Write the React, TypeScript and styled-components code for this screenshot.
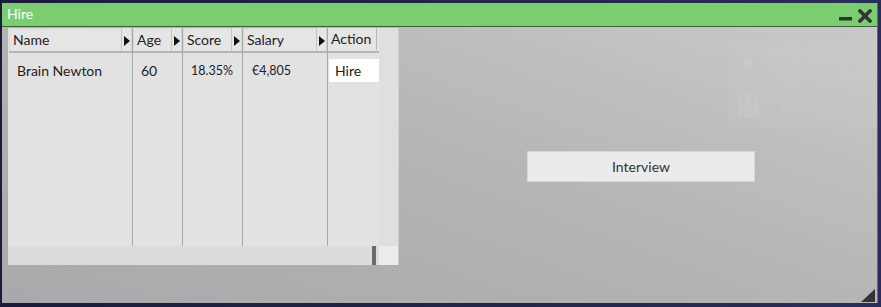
import React from "react";
import styled, { createGlobalStyle } from "styled-components";

const Global = createGlobalStyle`
  html, body { margin: 0; padding: 0; }
  body { width: 881px; height: 307px; overflow: hidden; background: #1c1e3c; font-family: Lato, "Noto Sans", sans-serif; }
  #root { width: 881px; height: 307px; }
`;

const Page = styled.div`
  width: 881px;
  height: 307px;
  box-sizing: border-box;
  padding: 3px 3px 4px 2px;
  background: linear-gradient(90deg, #1a1c3a 0%, #23264a 60%, #2a2f5a 100%);
`;

const Window = styled.div`
  height: 100%;
  display: flex;
  flex-direction: column;
  border-right: 1px solid #5a64a8;
`;

const TitleBar = styled.div`
  height: 23px;
  flex: none;
  background: #7bce70;
  border-bottom: 1px solid #3d5e3a;
  display: flex;
  align-items: center;
  padding: 0 5px 0 5px;
`;

const Title = styled.span`
  color: #ffffff;
  font-size: 14px;
  flex: 1;
  margin-top: -3px;
`;

const TitleIcons = styled.div`
  display: flex;
  align-items: center;
  gap: 6px;
  margin-top: 3px;
`;

const Minimize = styled.svg`
  margin-top: 6px;
`;

const Body = styled.div`
  flex: 1;
  position: relative;
  display: flex;
  padding: 1px 0 0 6px;
  background: linear-gradient(20deg, #a9a9ab 0%, #b1b1b1 40%, #bebebe 75%, #c9c9c9 100%);
  overflow: hidden;
`;

const Ghost = styled.div`
  position: absolute;
  left: 725px;
  top: 14px;
  width: 160px;
  height: 86px;
  background: rgba(255, 255, 255, 0.035);
  color: rgba(255, 255, 255, 0.08);
  display: flex;
  flex-direction: column;
  overflow: hidden;
`;

const GhostRow = styled.div<{ $gap: number; $pad: number }>`
  display: flex;
  align-items: center;
  gap: ${(p) => p.$gap}px;
  padding: 0 0 0 ${(p) => p.$pad}px;
  border-bottom: 1px solid rgba(255, 255, 255, 0.05);
  height: 43px;
`;

const GhostText = styled.div`
  display: flex;
  flex-direction: column;
  line-height: 1;
`;

const GhostBig = styled.span<{ $size: number }>`
  font-size: ${(p) => p.$size}px;
`;

const GhostSmall = styled.span`
  font-size: 12px;
  white-space: nowrap;
  margin-top: 4px;
`;

const TablePanel = styled.div`
  width: 391px;
  height: 237px;
  flex: none;
  background: #e2e2e2;
  display: grid;
  grid-template-columns: 371px 20px;
  grid-template-rows: 218px 19px;
`;

const Grid = styled.div`
  display: flex;
  padding-left: 1px;
  overflow: hidden;
`;

const Column = styled.div<{ $w: number; $last?: boolean }>`
  width: ${(p) => p.$w}px;
  flex: none;
  display: flex;
  flex-direction: column;
  border-right: ${(p) => (p.$last ? "none" : "1px solid #a9a9a9")};
`;

const Header = styled.div`
  height: 23px;
  display: flex;
  border-bottom: 2px solid #b4b4b4;
  background: #e5e5e5;
  box-sizing: content-box;
`;

const HeaderLabel = styled.div`
  flex: 1;
  font-size: 14px;
  color: #222;
  padding: 2px 0 0 3px;
  border-right: 1px solid #c4c4c4;
  border-top: 1px solid #d8d8d8;
  border-left: 1px solid #d8d8d8;
`;

const SortButton = styled.div`
  width: 9px;
  display: flex;
  align-items: center;
  justify-content: center;
  border-right: 1px solid #d4d4d4;
  padding-top: 2px;
`;

const Arrow = styled.div`
  width: 0;
  height: 0;
  border-top: 5px solid transparent;
  border-bottom: 5px solid transparent;
  border-left: 6px solid #111;
  margin-left: 1px;
`;

const Cell = styled.div<{ $pad: number; $size: number }>`
  margin-top: 6px;
  height: 23px;
  display: flex;
  align-items: center;
  padding-left: ${(p) => p.$pad}px;
  font-size: ${(p) => p.$size}px;
  color: #222;
`;

const ActionCell = styled.div`
  margin: 6px 0 0 1px;
  height: 23px;
  width: 51px;
  background: #ffffff;
  display: flex;
  align-items: center;
  padding-left: 6px;
  box-sizing: border-box;
  font-size: 14px;
  color: #222;
`;

const ActionHeader = styled.div`
  height: 23px;
  display: flex;
  align-items: flex-start;
  border-bottom: 2px solid #b4b4b4;
  background: #e5e5e5;
`;

const ActionLabel = styled.div`
  width: 49px;
  height: 22px;
  font-size: 14px;
  color: #222;
  padding: 2px 0 0 3px;
  box-sizing: border-box;
  border-right: 1px solid #b8b8b8;
`;

const ActionStub = styled.div`
  width: 1px;
  height: 13px;
  margin: 6px 0 0 2px;
  background: #555;
`;

const VScroll = styled.div`
  background: #dfdfdf;
  border-right: 1px solid #d0d0d0;
`;

const HScroll = styled.div`
  background: #dcdcdc;
  display: flex;
  justify-content: flex-end;
  padding-right: 3px;
`;

const Thumb = styled.div`
  width: 4px;
  background: #6b6b6b;
`;

const Corner = styled.div`
  background: #ececec;
  border-right: 1px solid #d0d0d0;
`;

const ButtonArea = styled.div`
  flex: 1;
  display: flex;
  align-items: center;
  justify-content: center;
  padding-left: 6px;
  padding-top: 1px;
`;

const Button = styled.button`
  width: 228px;
  height: 31px;
  background: #ebebeb;
  border: 1px solid #d6d6d6;
  font-family: Lato, "Noto Sans", sans-serif;
  font-size: 14px;
  color: #333;
  padding: 0;
  cursor: pointer;
`;

const Grip = styled.svg`
  position: absolute;
  right: 2px;
  bottom: 1px;
`;

const cols = [
  { key: "Name", w: 123, value: "Brain Newton", pad: 8, size: 14 },
  { key: "Age", w: 49, value: "60", pad: 8, size: 14 },
  { key: "Score", w: 59, value: "18.35%", pad: 8, size: 12.5 },
  { key: "Salary", w: 84, value: "€4,805", pad: 9, size: 12.5 },
];

export default function App() {
  return (
    <>
      <Global />
      <Page>
        <Window>
          <TitleBar>
            <Title>Hire</Title>
            <TitleIcons>
              <Minimize width="13" height="4" viewBox="0 0 13 4">
                <rect x="0" y="0" width="13" height="3.5" fill="#333" />
              </Minimize>
              <svg width="14" height="14" viewBox="0 0 14 14">
                <path d="M2 2 L12 12 M12 2 L2 12" stroke="#333" strokeWidth="3.6" strokeLinecap="square" />
              </svg>
            </TitleIcons>
          </TitleBar>
          <Body>
            <Ghost>
              <GhostRow $gap={14} $pad={16}>
                <svg width="11" height="12" viewBox="0 0 11 12">
                  <path d="M1 1 L10 6 L1 11 Z" fill="rgba(255,255,255,0.08)" />
                </svg>
                <GhostText>
                  <GhostBig $size={17}>Designing</GhostBig>
                  <GhostSmall>Expected quality: Hi</GhostSmall>
                </GhostText>
              </GhostRow>
              <GhostRow $gap={6} $pad={9}>
                <svg width="25" height="26" viewBox="0 0 24 26">
                  <g fill="rgba(255,255,255,0.09)">
                    <circle cx="12" cy="4" r="3" />
                    <rect x="8" y="8" width="8" height="18" />
                    <circle cx="4" cy="8" r="2.5" />
                    <rect x="1" y="11" width="6" height="14" />
                    <circle cx="20" cy="8" r="2.5" />
                    <rect x="17" y="11" width="6" height="14" />
                  </g>
                </svg>
                <GhostBig $size={21}>Core</GhostBig>
              </GhostRow>
            </Ghost>
            <TablePanel>
              <Grid>
                {cols.map((c) => (
                  <Column key={c.key} $w={c.w}>
                    <Header>
                      <HeaderLabel>{c.key}</HeaderLabel>
                      <SortButton>
                        <Arrow />
                      </SortButton>
                    </Header>
                    <Cell $pad={c.pad} $size={c.size}>
                      {c.value}
                    </Cell>
                  </Column>
                ))}
                <Column $w={52} $last>
                  <ActionHeader>
                    <ActionLabel>Action</ActionLabel>
                    <ActionStub />
                  </ActionHeader>
                  <ActionCell>Hire</ActionCell>
                </Column>
              </Grid>
              <VScroll />
              <HScroll>
                <Thumb />
              </HScroll>
              <Corner />
            </TablePanel>
            <ButtonArea>
              <Button>Interview</Button>
            </ButtonArea>
            <Grip width="14" height="13" viewBox="0 0 14 13">
              <path d="M14 0 L14 13 L0 13 Z" fill="#333" />
            </Grip>
          </Body>
        </Window>
      </Page>
    </>
  );
}
